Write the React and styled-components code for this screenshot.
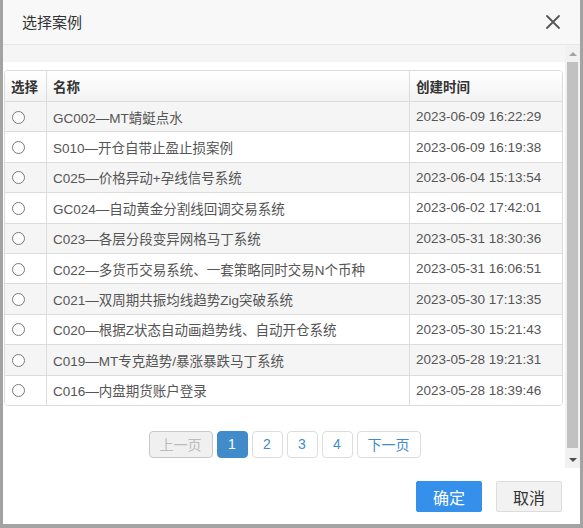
import React from 'react';
import styled, { createGlobalStyle } from 'styled-components';

const GlobalStyle = createGlobalStyle`
  html, body {
    margin: 0;
    padding: 0;
    background: #a3a3a3;
  }
  body {
    font-family: "Liberation Sans", "Noto Sans CJK SC", sans-serif;
  }
`;

const Backdrop = styled.div`
  width: 583px;
  height: 528px;
  padding: 0 3px 4px 3px;
  box-sizing: border-box;
  background: #a3a3a3;
`;

const Dialog = styled.div`
  height: 524px;
  background: #fff;
  display: flex;
  flex-direction: column;
`;

const Header = styled.div`
  height: 44px;
  flex: none;
  background: #f8f8f8;
  border-bottom: 1px solid #e8e8e8;
  display: flex;
  align-items: center;
  justify-content: space-between;
  padding: 0 19px 0 19px;
`;

const Title = styled.div`
  font-size: 15px;
  color: #333;
  margin-top: -1px;
`;

const Close = styled.button`
  width: 16px;
  height: 16px;
  padding: 0;
  border: none;
  background: none;
  cursor: pointer;
  display: flex;
`;

const Body = styled.div`
  height: 423px;
  flex: none;
  display: flex;
`;

const Scroller = styled.div`
  flex: 1;
  overflow: hidden;
`;

const Strip = styled.div`
  height: 17px;
  background: #f5f5f5;
`;

const TableWrap = styled.div`
  margin: 8px 2px 0 1px;
  border: 1px solid #dcdcdc;
  border-radius: 4px;
  overflow: hidden;
`;

const Table = styled.table`
  width: 100%;
  table-layout: fixed;
  border-collapse: separate;
  border-spacing: 0;
  font-size: 13.5px;
`;

const Th = styled.th`
  height: 30px;
  padding: 0 6px;
  text-align: left;
  font-weight: bold;
  color: #333;
  background: linear-gradient(to bottom, #ffffff 0%, #f3f3f3 100%);
  border-left: ${p => (p.$first ? 'none' : '1px solid #dcdcdc')};
  box-sizing: border-box;
  white-space: nowrap;
`;

const Row = styled.tr`
  background: ${p => (p.$odd ? '#f5f5f5' : '#fff')};
`;

const Td = styled.td`
  height: 30.4px;
  padding: 0 6px;
  border-top: 1px solid #dcdcdc;
  border-left: ${p => (p.$first ? 'none' : '1px solid #dcdcdc')};
  color: #555;
  box-sizing: border-box;
  white-space: nowrap;
  overflow: hidden;
`;

const Radio = styled.input.attrs({ type: 'radio' })`
  appearance: none;
  display: block;
  width: 13px;
  height: 13px;
  margin: 1px 0 0 1px;
  border: 1px solid #7a7a7a;
  border-radius: 50%;
  background: #fff;
  box-sizing: border-box;
`;

const Pager = styled.div`
  margin-top: 25px;
  display: flex;
  justify-content: center;
  gap: 4px;
  padding-left: 1px;
`;

const PageBtn = styled.span`
  height: 27px;
  min-width: 31px;
  padding: ${p => (p.$wide ? '0 10px' : '0')};
  box-sizing: border-box;
  border: 1px solid ${p => (p.$active ? '#428bca' : p.$disabled ? '#c8c8c8' : '#dddddd')};
  border-radius: 4px;
  background: ${p => (p.$active ? '#428bca' : p.$disabled ? '#f0f0f0' : '#fff')};
  color: ${p => (p.$active ? '#fff' : p.$disabled ? '#bbbbbb' : '#428bca')};
  font-size: 14px;
  display: flex;
  align-items: center;
  justify-content: center;
`;

const ScrollBar = styled.div`
  width: 15px;
  flex: none;
  background: #f1f1f1;
  display: flex;
  flex-direction: column;
  align-items: center;
`;

const Arrow = styled.div`
  height: 17px;
  width: 100%;
  display: flex;
  align-items: center;
  justify-content: center;
  flex: none;

  &::before {
    content: '';
    border-left: 4px solid transparent;
    border-right: 4px solid transparent;
    ${p => (p.$down
      ? 'border-top: 4px solid #505050;'
      : 'border-bottom: 4px solid #a3a3a3;')}
  }
`;

const Thumb = styled.div`
  width: 11px;
  flex: 1;
  margin: 0 0 3px;
  background: #c1c1c1;
`;

const Footer = styled.div`
  flex: 1;
  display: flex;
  justify-content: flex-end;
  align-items: flex-start;
  gap: 14px;
  padding: 13px 18px 0 0;
`;

const Button = styled.button`
  height: 31px;
  width: 66px;
  font-family: "Liberation Sans", "Noto Sans CJK SC", sans-serif;
  font-size: 16px;
  border-radius: 2px;
  border: 1px solid ${p => (p.$primary ? '#3490ea' : '#dcdcdc')};
  background: ${p => (p.$primary ? '#3490ea' : '#f2f2f2')};
  color: ${p => (p.$primary ? '#fff' : '#333')};
  padding: 0;
  cursor: pointer;
`;

const cases = [
  ['GC002—MT蜻蜓点水', '2023-06-09 16:22:29'],
  ['S010—开仓自带止盈止损案例', '2023-06-09 16:19:38'],
  ['C025—价格异动+孕线信号系统', '2023-06-04 15:13:54'],
  ['GC024—自动黄金分割线回调交易系统', '2023-06-02 17:42:01'],
  ['C023—各层分段变异网格马丁系统', '2023-05-31 18:30:36'],
  ['C022—多货币交易系统、一套策略同时交易N个币种', '2023-05-31 16:06:51'],
  ['C021—双周期共振均线趋势Zig突破系统', '2023-05-30 17:13:35'],
  ['C020—根据Z状态自动画趋势线、自动开仓系统', '2023-05-30 15:21:43'],
  ['C019—MT专克趋势/暴涨暴跌马丁系统', '2023-05-28 19:21:31'],
  ['C016—内盘期货账户登录', '2023-05-28 18:39:46'],
];

export default function App() {
  return (
    <>
      <GlobalStyle />
      <Backdrop>
        <Dialog>
          <Header>
            <Title>选择案例</Title>
            <Close aria-label="关闭">
              <svg width="16" height="16" viewBox="0 0 16 16">
                <path d="M2 2 L14 14 M14 2 L2 14" stroke="#555" strokeWidth="1.8" strokeLinecap="round" />
              </svg>
            </Close>
          </Header>
          <Body>
            <Scroller>
              <Strip />
              <TableWrap>
                <Table>
                  <colgroup>
                    <col style={{ width: 41 }} />
                    <col style={{ width: 363 }} />
                    <col style={{ width: 153 }} />
                  </colgroup>
                  <thead>
                    <tr>
                      <Th $first>选择</Th>
                      <Th>名称</Th>
                      <Th>创建时间</Th>
                    </tr>
                  </thead>
                  <tbody>
                    {cases.map(([name, time], i) => (
                      <Row key={name} $odd={i % 2 === 0}>
                        <Td $first><Radio name="case" /></Td>
                        <Td>{name}</Td>
                        <Td>{time}</Td>
                      </Row>
                    ))}
                  </tbody>
                </Table>
              </TableWrap>
              <Pager>
                <PageBtn $wide $disabled>上一页</PageBtn>
                <PageBtn $active>1</PageBtn>
                <PageBtn>2</PageBtn>
                <PageBtn>3</PageBtn>
                <PageBtn>4</PageBtn>
                <PageBtn $wide>下一页</PageBtn>
              </Pager>
            </Scroller>
            <ScrollBar>
              <Arrow />
              <Thumb />
              <Arrow $down />
            </ScrollBar>
          </Body>
          <Footer>
            <Button $primary>确定</Button>
            <Button>取消</Button>
          </Footer>
        </Dialog>
      </Backdrop>
    </>
  );
}
